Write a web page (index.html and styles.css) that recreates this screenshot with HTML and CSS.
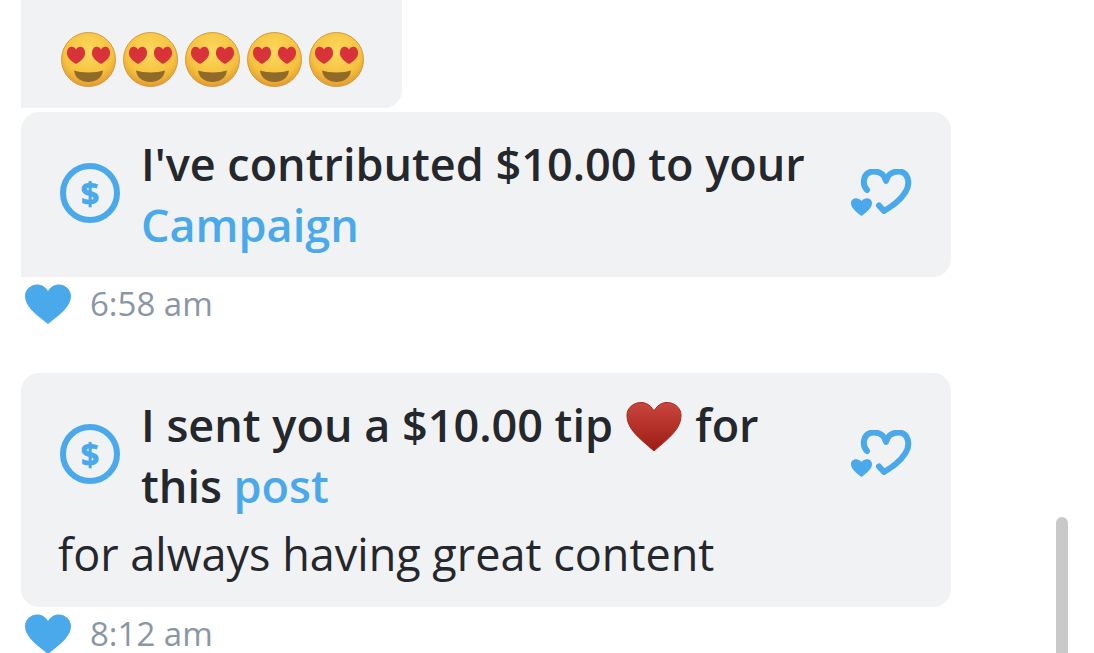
FILE: index.html
```html
<!DOCTYPE html>
<html lang="en">
<head>
<meta charset="utf-8">
<title>Messages</title>
<link rel="stylesheet" href="styles.css">
</head>
<body>
<svg class="defs" width="0" height="0" aria-hidden="true">
  <defs>
    <radialGradient id="face" cx="50%" cy="35%" r="65%">
      <stop offset="0" stop-color="#fbd95e"/>
      <stop offset=".7" stop-color="#f6c23e"/>
      <stop offset="1" stop-color="#e29a30"/>
    </radialGradient>
    <linearGradient id="redheart" x1="0" y1="0" x2="0" y2="1">
      <stop offset="0" stop-color="#c9463e"/>
      <stop offset="1" stop-color="#9c1c14"/>
    </linearGradient>
    <symbol id="love" viewBox="0 0 55 55">
      <circle cx="27.5" cy="27.5" r="27" fill="url(#face)" stroke="#d39a40" stroke-width="1"/>
      <path d="M15 32 C8 28 5.500 24 6 20 C6.500 14 12.500 13 15 17.500 C17.500 13 23.500 14 24 20 C24.500 24 22 28 15 32Z" fill="#d8323a"/>
      <path d="M40 32 C33 28 30.500 24 31 20 C31.500 14 37.500 13 40 17.500 C42.500 13 48.500 14 49 20 C49.500 24 47 28 40 32Z" fill="#d8323a"/>
      <path d="M13 38.500 C20 41 35 41 42 38.500 C41 46 35 50 27.500 50 C20 50 14 46 13 38.500Z" fill="#8f6a2a"/>
    </symbol>
    <symbol id="dollar" viewBox="0 0 60 60">
      <circle cx="30" cy="30" r="27" fill="none" stroke="currentColor" stroke-width="6"/>
      <text x="30" y="42" text-anchor="middle" class="dollar-sign">$</text>
    </symbol>
    <symbol id="hearts" viewBox="22 20 62 48">
      <path d="M38 41 C32.500 35 34 22.500 45 22.500 C52 22.500 56 27 57 32 C58 27 62 22.500 69.500 22.500 C79 22.500 82 34 76.500 43 C71 52 63 57 55 62 L50 56.500" fill="none" stroke="currentColor" stroke-width="6" stroke-linecap="round" stroke-linejoin="round"/>
      <path d="M32.500 67 C26 62 22 58.500 22 54 C22 49 29 47.500 32.500 52 C36 47.500 43 49 43 54 C43 58.500 39 62 32.500 67Z" fill="currentColor"/>
    </symbol>
    <symbol id="heart" viewBox="0 0 46 41">
      <path d="M23 41 C9 30 0 23 0 13 C0 2 16 -4 23 8 C30 -4 46 2 46 13 C46 23 37 30 23 41Z" fill="currentColor"/>
    </symbol>
  </defs>
</svg>

<main class="thread">
  <div class="bubble emoji-bubble">
    <svg class="emoji"><use href="#love"/></svg>
    <svg class="emoji"><use href="#love"/></svg>
    <svg class="emoji"><use href="#love"/></svg>
    <svg class="emoji"><use href="#love"/></svg>
    <svg class="emoji"><use href="#love"/></svg>
  </div>

  <div class="message">
    <div class="bubble tip-bubble">
      <div class="tip-row">
        <svg class="dollar"><use href="#dollar"/></svg>
        <p class="tip-text">I've contributed $10.00 to your <a class="link">Campaign</a></p>
        <svg class="hearts"><use href="#hearts"/></svg>
      </div>
    </div>
    <div class="meta">
      <svg class="meta-heart"><use href="#heart"/></svg>
      <span class="time">6:58 am</span>
    </div>
  </div>

  <div class="message">
    <div class="bubble tip-bubble">
      <div class="tip-row">
        <svg class="dollar"><use href="#dollar"/></svg>
        <p class="tip-text">I sent you a $10.00 tip <svg class="red-heart" viewBox="0 0 56 52"><path d="M28 51 C12 37 1 29 1 15 C1 3 20 -4 28 11 C36 -4 55 3 55 15 C55 29 44 37 28 51Z" fill="url(#redheart)" stroke="#a8281f" stroke-width="1"/></svg> for this <a class="link">post</a></p>
        <svg class="hearts"><use href="#hearts"/></svg>
      </div>
      <p class="note">for always having great content</p>
    </div>
    <div class="meta">
      <svg class="meta-heart"><use href="#heart"/></svg>
      <span class="time">8:12 am</span>
    </div>
  </div>
</main>

<div class="scrollbar"></div>
</body>
</html>
```

FILE: styles.css
```css
html, body {
  margin: 0;
  height: 100%;
  overflow: hidden;
  background: #fff;
}
body {
  font-family: "Open Sans", sans-serif;
  color: #24272b;
}
.defs { position: absolute; }
.thread {
  display: flex;
  flex-direction: column;
  align-items: flex-start;
  padding-left: 21px;
  gap: 4px;
  height: 653px;
  overflow: hidden;
}
.thread > * { flex: none; }
.bubble {
  background: #f1f2f4;
  border-radius: 18px;
}
.emoji-bubble {
  width: 381px;
  height: 108px;
  box-sizing: border-box;
  padding: 32px 0 0 40px;
  display: flex;
  gap: 7px;
  border-radius: 0 0 18px 0;
}
.emoji { width: 55px; height: 55px; }
.message {
  display: flex;
  flex-direction: column;
  margin-bottom: 39px;
}
.tip-bubble {
  width: 930px;
  box-sizing: border-box;
  padding: 21px 38px 22px 39px;
}
.message:nth-child(2) .tip-bubble { border-radius: 18px 18px 18px 0; }
.tip-row {
  display: flex;
  align-items: center;
}
.dollar {
  width: 60px;
  height: 60px;
  color: #4aa9ea;
  flex: none;
  margin-right: 21px;
  margin-bottom: 3px;
}
.dollar-sign {
  font: 800 32px "Open Sans", sans-serif;
  fill: currentColor;
}
.tip-text {
  margin: 0;
  flex: 1;
  padding-right: 20px;
  font-size: 45px;
  line-height: 61px;
  font-weight: 600;
}
.link { color: #4aa9ea; }
.red-heart {
  width: 56px;
  height: 52px;
  margin: 0 2px 0 1px;
  vertical-align: -10px;
}
.hearts {
  width: 62px;
  height: 48px;
  color: #4aa9ea;
  flex: none;
  margin-bottom: 3px;
}
.note {
  margin: 8px 0 1px -2px;
  font-size: 45px;
  line-height: 60px;
}
.meta {
  display: flex;
  align-items: center;
  height: 53px;
  padding-left: 4px;
}
.meta-heart {
  width: 46px;
  height: 41px;
  color: #4aa9ea;
  margin-right: 19px;
}
.time {
  font-size: 33px;
  color: #8a96a3;
}
.scrollbar {
  position: absolute;
  left: 1056px;
  top: 517px;
  width: 12px;
  height: 136px;
  background: #c9c9c9;
  border-radius: 6px 6px 0 0;
}
```
